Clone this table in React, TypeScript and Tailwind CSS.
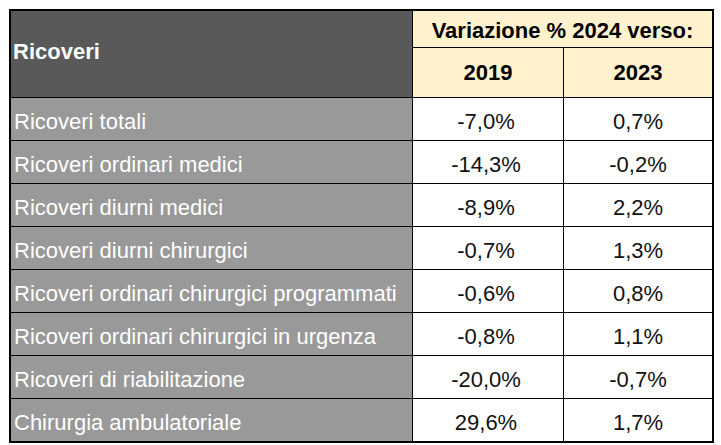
import React from 'react';

const rows = [
  { label: 'Ricoveri totali', v2019: '-7,0%', v2023: '0,7%' },
  { label: 'Ricoveri ordinari medici', v2019: '-14,3%', v2023: '-0,2%' },
  { label: 'Ricoveri diurni medici', v2019: '-8,9%', v2023: '2,2%' },
  { label: 'Ricoveri diurni chirurgici', v2019: '-0,7%', v2023: '1,3%' },
  { label: 'Ricoveri ordinari chirurgici programmati', v2019: '-0,6%', v2023: '0,8%' },
  { label: 'Ricoveri ordinari chirurgici in urgenza', v2019: '-0,8%', v2023: '1,1%' },
  { label: 'Ricoveri di riabilitazione', v2019: '-20,0%', v2023: '-0,7%' },
  { label: 'Chirurgia ambulatoriale', v2019: '29,6%', v2023: '1,7%' },
];

export default function App() {
  return (
    <div className="w-[721px] h-[445px] bg-white pt-[9px] pl-[9px] font-['Liberation_Sans',Arial,sans-serif] text-[22px]">
      <div className="w-[705px] border-2 border-black bg-black grid grid-cols-[401px_150px_148px] grid-rows-[36px_49px_repeat(8,42px)] gap-px">
        {/* header */}
        <div className="row-span-2 bg-[#595959] text-white font-bold flex items-center pl-[2px] pb-[5px]">
          Ricoveri
        </div>
        <div className="col-span-2 bg-[#fff2cc] text-black font-bold flex items-center justify-center pt-[2px]">
          Variazione % 2024 verso:
        </div>
        <div className="bg-[#fff2cc] text-black font-bold flex items-center justify-center">2019</div>
        <div className="bg-[#fff2cc] text-black font-bold flex items-center justify-center">2023</div>

        {rows.map((r) => (
          <React.Fragment key={r.label}>
            <div className="bg-[#999999] text-white flex items-center pl-[3px] pt-1 whitespace-nowrap">{r.label}</div>
            <div className="bg-white text-[#111111] flex items-center justify-center pt-1 pr-[4px]">{r.v2019}</div>
            <div className="bg-white text-[#111111] flex items-center justify-center pt-1">{r.v2023}</div>
          </React.Fragment>
        ))}
      </div>
    </div>
  );
}
